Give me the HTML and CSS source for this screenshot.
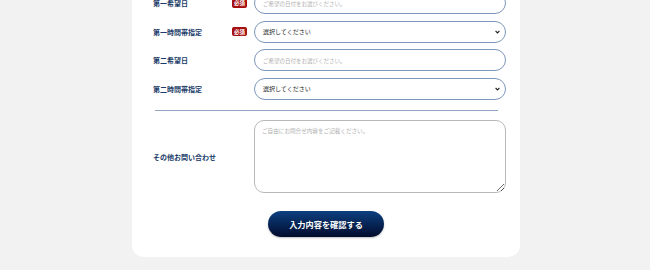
FILE: index.html
```html
<!DOCTYPE html>
<html lang="ja">
<head>
    <meta charset="UTF-8">
    <meta name="viewport" content="width=device-width, initial-scale=1.0">
    <title>お問い合わせ</title>
    <link rel="stylesheet" href="styles.css">
</head>
<body>
    <div class="card">
        <form class="form">
            <div class="row">
                <label class="label" for="date1">第一希望日</label>
                <span class="required">必須</span>
                <input type="text" id="date1" class="field" placeholder="ご希望の日付をお選びください。">
            </div>
            <div class="row">
                <label class="label" for="time1">第一時間帯指定</label>
                <span class="required">必須</span>
                <select id="time1" class="field select">
                    <option>選択してください</option>
                </select>
            </div>
            <div class="row">
                <label class="label" for="date2">第二希望日</label>
                <input type="text" id="date2" class="field" placeholder="ご希望の日付をお選びください。">
            </div>
            <div class="row">
                <label class="label" for="time2">第二時間帯指定</label>
                <select id="time2" class="field select">
                    <option>選択してください</option>
                </select>
            </div>
            <hr class="divider">
            <div class="row row-textarea">
                <label class="label" for="message">その他お問い合わせ</label>
                <textarea id="message" class="field textarea" placeholder="ご自由にお問合せ内容をご記載ください。"></textarea>
            </div>
            <div class="actions">
                <button type="button" class="submit">入力内容を確認する</button>
            </div>
        </form>
    </div>
</body>
</html>
```

FILE: styles.css
```css
body {
    margin: 0;
    background: #f2f2f2;
    font-family: "Noto Sans CJK JP", "Noto Sans", sans-serif;
}
.card {
    width: 388px;
    margin: -8px 0 0 calc(50% - 193px);
    background: #fff;
    border-radius: 0 0 12px 12px;
    padding-bottom: 20px;
}
.form {
    padding: 0 14px 0 21px;
}
.row {
    display: flex;
    align-items: center;
    height: 22px;
    margin-bottom: 6.5px;
}
.label {
    width: 79px;
    font-size: 7px;
    font-weight: bold;
    color: #183a68;
    white-space: nowrap;
}
.required {
    width: 15px;
    height: 9px;
    margin-right: 7px;
    background: #a50e0e;
    color: #fff;
    font-size: 5.5px;
    font-weight: bold;
    border-radius: 2px;
    display: flex;
    align-items: center;
    justify-content: center;
}
.row .label + .field {
    margin-left: 22px;
}
.field {
    flex: 1;
    height: 22px;
    box-sizing: border-box;
    border: 1px solid #7d97ba;
    border-radius: 11px;
    padding: 0 8px;
    font-family: inherit;
    font-size: 6px;
    color: #222;
    background: #fff;
    outline: none;
}
.field::placeholder {
    color: #b0b0b0;
    font-size: 5.5px;
}
.select {
    appearance: none;
    -webkit-appearance: none;
    padding: 0 12px 0 8px;
    background: #fff url("data:image/svg+xml,%3Csvg xmlns='http://www.w3.org/2000/svg' width='5' height='4' viewBox='0 0 5 4'%3E%3Cpath d='M0.6 1 L2.5 2.9 L4.4 1' fill='none' stroke='%23222' stroke-width='1.1'/%3E%3C/svg%3E") no-repeat right 5px center;
}
.divider {
    border: none;
    border-top: 1px solid #8ea4c2;
    margin: 10.5px 8px 9px 2px;
}
.row-textarea {
    height: 73px;
    margin-bottom: 18px;
}
.field.textarea {
    height: 73px;
    border: 1px solid #b8b8b8;
    border-radius: 10px;
    padding: 6px 7px;
    resize: vertical;
}
.textarea::placeholder {
    font-size: 5.6px;
}
.actions {
    display: flex;
    justify-content: center;
    padding-right: 7px;
}
.submit {
    width: 116px;
    height: 26px;
    border: none;
    border-radius: 13px;
    background: linear-gradient(to bottom, #0c4080, #020b2c);
    color: #fff;
    font-family: inherit;
    font-size: 8.2px;
    font-weight: bold;
    cursor: pointer;
    box-shadow: 0 1px 2px rgba(0, 0, 0, 0.25);
}
```
